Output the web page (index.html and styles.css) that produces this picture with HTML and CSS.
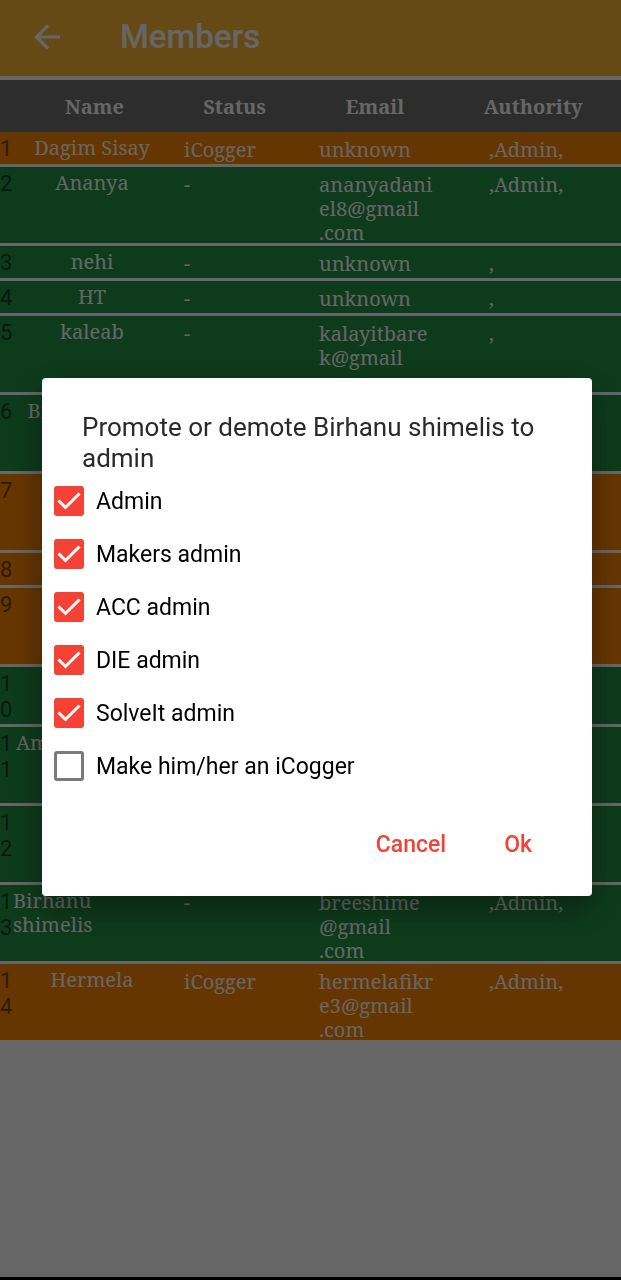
FILE: index.html
```html
<!DOCTYPE html>
<html lang="en">
<head>
<meta charset="utf-8">
<meta name="viewport" content="width=device-width, initial-scale=1">
<title>Members</title>
<link rel="stylesheet" href="styles.css">
</head>
<body>
<div class="screen">
  <header class="app-bar">
    <button class="back" type="button" aria-label="Back">
      <svg viewBox="0 0 26 26" width="26" height="26" fill="none" stroke="currentColor" stroke-width="3.2"><path d="M26 13H3M14 1.500L2.500 13L14 24.500"/></svg>
    </button>
    <h1 class="app-title">Members</h1>
  </header>
  <table class="members">
    <thead>
      <tr class="head"><td></td><th>Name</th><th>Status</th><th>Email</th><th>Authority</th></tr>
    </thead>
    <tbody>
      <tr class="row icogger"><td class="num">1</td><td class="name"><span>Dagim Sisay</span></td><td class="info">iCogger</td><td class="info">unknown</td><td class="info">,Admin,</td></tr>
      <tr class="row tall"><td class="num">2</td><td class="name"><span>Ananya</span></td><td class="info">-</td><td class="info">ananyadani<br>el8@gmail<br>.com</td><td class="info">,Admin,</td></tr>
      <tr class="row"><td class="num">3</td><td class="name"><span>nehi</span></td><td class="info">-</td><td class="info">unknown</td><td class="info">,</td></tr>
      <tr class="row"><td class="num">4</td><td class="name"><span>HT</span></td><td class="info">-</td><td class="info">unknown</td><td class="info">,</td></tr>
      <tr class="row tall"><td class="num">5</td><td class="name"><span>kaleab</span></td><td class="info">-</td><td class="info">kalayitbare<br>k@gmail</td><td class="info">,</td></tr>
      <tr class="row tall"><td class="num">6</td><td class="name"><span>Biruk Kebede</span></td><td class="info"></td><td class="info"></td><td class="info"></td></tr>
      <tr class="row tall icogger"><td class="num">7</td><td class="name"></td><td class="info"></td><td class="info"></td><td class="info"></td></tr>
      <tr class="row icogger"><td class="num">8</td><td class="name"></td><td class="info"></td><td class="info"></td><td class="info"></td></tr>
      <tr class="row tall icogger"><td class="num">9</td><td class="name"></td><td class="info"></td><td class="info"></td><td class="info"></td></tr>
      <tr class="row medium"><td class="num">10</td><td class="name"></td><td class="info"></td><td class="info"></td><td class="info"></td></tr>
      <tr class="row tall"><td class="num">11</td><td class="name"><span>Amanuel Girma</span></td><td class="info"></td><td class="info"></td><td class="info"></td></tr>
      <tr class="row tall"><td class="num">12</td><td class="name"></td><td class="info"></td><td class="info"></td><td class="info"></td></tr>
      <tr class="row tall"><td class="num">13</td><td class="name"><span>Birhanu shimelis</span></td><td class="info">-</td><td class="info">breeshime<br>@gmail<br>.com</td><td class="info">,Admin,</td></tr>
      <tr class="row tall icogger"><td class="num">14</td><td class="name"><span>Hermela</span></td><td class="info">iCogger</td><td class="info">hermelafikr<br>e3@gmail<br>.com</td><td class="info">,Admin,</td></tr>
    </tbody>
  </table>
  <div class="nav-edge"></div>
</div>
<div class="scrim">
  <form class="dialog" role="dialog" aria-labelledby="dialog-title">
    <h2 class="dialog-title" id="dialog-title">Promote or demote Birhanu shimelis to admin</h2>
    <label class="option"><input type="checkbox" checked>Admin</label>
    <label class="option"><input type="checkbox" checked>Makers admin</label>
    <label class="option"><input type="checkbox" checked>ACC admin</label>
    <label class="option"><input type="checkbox" checked>DIE admin</label>
    <label class="option"><input type="checkbox" checked>SolveIt admin</label>
    <label class="option"><input type="checkbox">Make him/her an iCogger</label>
    <div class="actions">
      <button type="button">Cancel</button>
      <button type="button">Ok</button>
    </div>
  </form>
</div>
</body>
</html>
```
FILE: styles.css
```css
* { box-sizing: border-box; }

body {
  margin: 0;
  background: #fff;
  font-family: Roboto, sans-serif;
}

.screen {
  display: flex;
  flex-direction: column;
  min-height: 100vh;
}

.app-bar {
  display: flex;
  align-items: center;
  gap: 60px;
  height: 76px;
  padding: 0 0 2px 34px;
  background: #ffb938;
  color: #fff;
}

.back {
  display: flex;
  padding: 0;
  border: 0;
  background: none;
  color: inherit;
}

.app-title {
  margin: 0;
  font-size: 33px;
  font-weight: 500;
  line-height: 40px;
}

.members {
  display: block;
  padding-top: 4px;
  color: #fff;
  font-family: "Noto Serif", "DejaVu Serif", serif;
  font-size: 20px;
  line-height: 24px;
}

.members thead,
.members tbody { display: block; }

.members td,
.members th { padding: 0; }

.head {
  display: grid;
  grid-template-columns: 24px 141fr 140fr 141fr 176fr;
  align-items: center;
  height: 52px;
  padding-top: 2px;
  background: #707070;
}

.row {
  display: grid;
  grid-template-columns: 13px 158fr 135fr 170fr 145fr;
  height: 32px;
  margin-bottom: 3px;
  overflow: hidden;
  background: #239446;
}

.medium { height: 57px; }
.tall { height: 76px; }
.icogger { background: #ff8700; }

.members .num {
  padding-top: 4px;
  color: rgba(0, 0, 0, 0.55);
  font-family: Roboto, sans-serif;
  font-size: 22px;
  line-height: 26px;
  word-break: break-all;
}

.members .name {
  display: flex;
  align-items: flex-start;
  justify-content: center;
  padding-top: 4px;
}

.members .info {
  padding: 6px 0 0 13px;
}

.nav-edge {
  height: 3px;
  margin-top: auto;
  background: #000;
}

.scrim {
  position: fixed;
  inset: 0;
  display: flex;
  align-items: center;
  padding: 0 29px 7px 42px;
  background: rgba(0, 0, 0, 0.6);
}

.dialog {
  flex: 1;
  padding: 34px 12px 26px;
  border-radius: 4px;
  background: #fff;
  box-shadow: 0 12px 32px rgba(0, 0, 0, 0.4);
}

.dialog-title {
  margin: 0 28px 1px;
  color: #2a2a2a;
  font-size: 26px;
  font-weight: 400;
  line-height: 31px;
}

.option {
  display: flex;
  align-items: center;
  gap: 12px;
  height: 53px;
  color: #000;
  font-size: 23px;
  line-height: 27px;
}

.option input {
  appearance: none;
  flex: none;
  width: 30px;
  height: 30px;
  margin: 0;
  border: 3px solid #7a7a7a;
  border-radius: 3px;
}

.option input:checked {
  border: 0;
  background: #f44336 url("data:image/svg+xml,%3Csvg xmlns='http://www.w3.org/2000/svg' viewBox='0 0 30 30'%3E%3Cpath d='M4.500 14.500L11.500 21.500L25.500 7.500' fill='none' stroke='%23fff' stroke-width='3'/%3E%3C/svg%3E");
}

.actions {
  display: flex;
  justify-content: flex-end;
  gap: 26px;
  padding: 27px 32px 0 0;
}

.actions button {
  padding: 0 16px;
  border: 0;
  background: none;
  color: #f44336;
  font: 500 23px/50px Roboto, sans-serif;
}
```
